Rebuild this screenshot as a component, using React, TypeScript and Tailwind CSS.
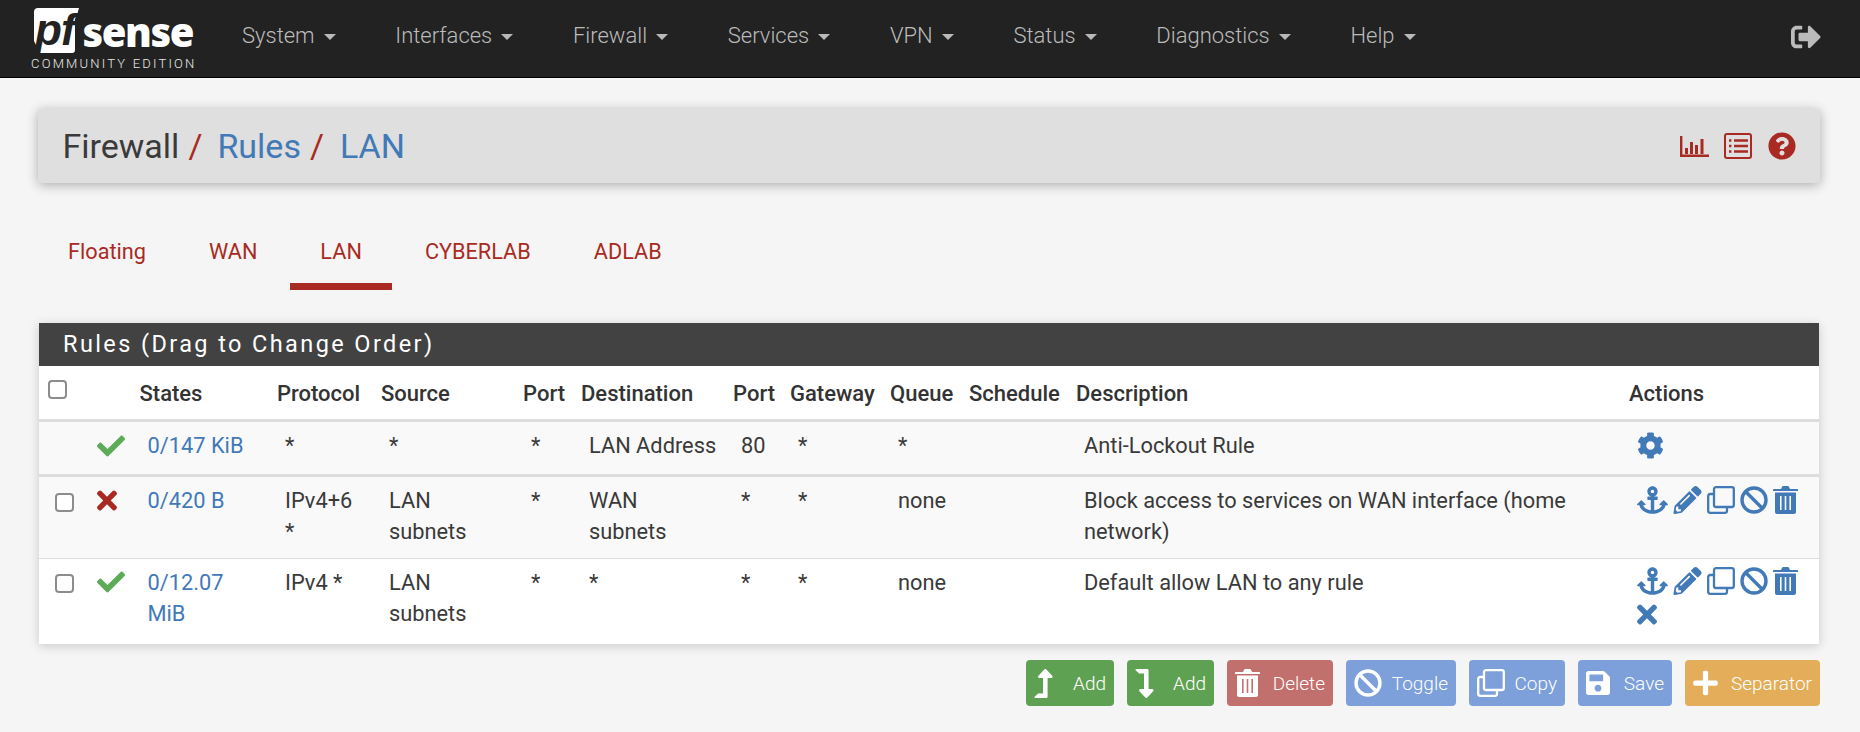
import React from "react";
import {
  FaAnchor, FaPencilAlt, FaCheck, FaTimes, FaCog, FaSignOutAlt, FaQuestionCircle,
  FaLevelUpAlt, FaLevelDownAlt, FaSave, FaPlus,
} from "react-icons/fa";

const Caret = () => (
  <span className="ml-[9px] mt-[2px] inline-block h-0 w-0 border-x-[6px] border-t-[6px] border-x-transparent border-t-[#b9b9b9]" />
);

const Trash = ({ className }: { className: string }) => (
  <svg viewBox="0 0 25 28" className={className} fill="currentColor">
    <path d="M8 3 9.2.6C9.400.2 9.700 0 10.100 0h4.800c.4 0 .7.2.9.6L17 3h7c.6 0 1 .4 1 1v1H0V4c0-.6.4-1 1-1z" />
    <path fillRule="evenodd" d="M2 6.500h21V26c0 1.100-.9 2-2 2H4c-1.100 0-2-.9-2-2zM7 10v14h1.600V10zm4.700 0v14h1.600V10zm4.700 0v14H18V10z" />
  </svg>
);

const Clone = ({ className }: { className: string }) => (
  <svg viewBox="0 0 28 28" className={className} fill="none" stroke="currentColor" strokeWidth="2.300">
    <path d="M7 8H3.200C2 8 1.200 8.800 1.200 10v14.800c0 1.200.8 2 2 2H18c1.200 0 2-.8 2-2V21" />
    <rect x="7" y="1.200" width="19.800" height="19.800" rx="2" />
  </svg>
);

const Ban = ({ className }: { className: string }) => (
  <svg viewBox="0 0 28 28" className={className} fill="none" stroke="currentColor" strokeWidth="3.400">
    <circle cx="14" cy="14" r="12" />
    <path d="M5.500 5.500 22.500 22.500" />
  </svg>
);

const Logo = () => (
  <svg viewBox="0 0 200 77" className="h-[77px] w-[200px] shrink-0">
    <path d="M38 8h41q-1 5-3 8-2 4-1 8v26q0 3-3 3H39q-2-3-3-8l-2-4V12q0-4 4-4z" fill="#fff" />
    <text x="35" y="45" fontFamily="'Liberation Sans', sans-serif" fontWeight="700" fontStyle="italic" fontSize="44" fill="#222" letterSpacing="-1">pf</text>
    <text x="82.500" y="47" fontFamily="'Open Sans', sans-serif" fontWeight="800" fontSize="40" fill="#fff" letterSpacing="-1.400">sense</text>
    <text x="31" y="68" fontFamily="Roboto, sans-serif" fontSize="13" fill="#e8e8e8" letterSpacing="2.200">COMMUNITY EDITION</text>
  </svg>
);

const navItems = ["System", "Interfaces", "Firewall", "Services", "VPN", "Status", "Diagnostics", "Help"];

const Check = () => <FaCheck className="block h-[28px] w-[28px] text-[#5cab56]" />;

const ActionIcons = () => (
  <>
    <FaAnchor className="h-[28px] w-[31px]" />
    <FaPencilAlt className="h-[28px] w-[29px]" />
    <Clone className="h-[28px] w-[28px]" />
    <Ban className="h-[28px] w-[28px]" />
    <Trash className="h-[28px] w-[25px]" />
  </>
);

const td = "align-top pl-2 pt-[8px]";
const Box = ({ className = "" }: { className?: string }) => (
  <input type="checkbox" className={"block h-[19px] w-[19px] appearance-none rounded-[4px] border-2 border-[#8c8c8c] bg-white " + className} />
);

const headers: [string, string][] = [
  ["States", "w-[137.500px]"], ["Protocol", "w-[104px]"], ["Source", "w-[142px]"], ["Port", "w-[58px]"],
  ["Destination", "w-[152px]"], ["Port", "w-[57px]"], ["Gateway", "w-[100px]"], ["Queue", "w-[79px]"],
  ["Schedule", "w-[107px]"], ["Description", "w-[553px]"], ["Actions", ""],
];

const buttons = [
  { label: "Add", w: "w-[88px]", bg: "bg-[#5fa152]", icon: <FaLevelUpAlt className="h-[29px] w-[19px]" /> },
  { label: "Add", w: "w-[87px]", bg: "bg-[#5fa152]", icon: <FaLevelDownAlt className="h-[29px] w-[19px]" /> },
  { label: "Delete", w: "w-[106px]", bg: "bg-[#c2706d]", icon: <Trash className="h-[28px] w-[25px]" /> },
  { label: "Toggle", w: "w-[110px]", bg: "bg-[#7da0da]", icon: <Ban className="h-[28px] w-[28px]" /> },
  { label: "Copy", w: "w-[96px]", bg: "bg-[#7da0da]", icon: <Clone className="h-[28px] w-[28px]" /> },
  { label: "Save", w: "w-[94px]", bg: "bg-[#7da0da]", icon: <FaSave className="h-[28px] w-[24px]" /> },
  { label: "Separator", w: "w-[135px]", bg: "bg-[#e3ad59]", icon: <FaPlus className="h-[28px] w-[25px]" /> },
];

export default function App() {
  return (
    <div className="min-h-[732px] bg-[#f5f5f5] font-['Roboto',sans-serif] text-[22px] leading-[31px] font-light text-[#333]">
      <nav className="flex h-[78px] items-start border-b border-black bg-[#222]">
        <Logo />
        <ul className="ml-[42px] flex pt-[20px] text-[#bbb]">
          {navItems.map((n) => (
            <li key={n} className="mr-[59.700px] flex items-center">
              {n}
              <Caret />
            </li>
          ))}
        </ul>
        <FaSignOutAlt className="ml-auto mr-[39px] mt-[22px] h-[30px] w-[30px] text-[#bbb]" />
      </nav>

      <main className="pl-[38px] pr-[40px]">
        <div className="mt-[31px] flex h-[74px] items-center rounded-[3px] bg-[#dfdfdf] pl-[24.500px] pr-[24px] text-[34px] font-normal text-[#3a3a3a] shadow-[0_2px_12px_rgba(0,0,0,0.3)]">
          <span>Firewall</span>
          <span className="ml-[9px] text-[#a92a23]">/</span>
          <span className="ml-[15px] text-[#4279b7]">Rules</span>
          <span className="ml-[9px] text-[#a92a23]">/</span>
          <span className="ml-[16px] text-[#4279b7]">LAN</span>
          <div className="ml-auto flex items-center gap-[16px] text-[#a92a23]">
            <svg viewBox="0 0 29 21" className="mr-[-1px] h-[21px] w-[29px]" fill="currentColor">
              <path d="M0 0h2.400v18.600H29V21H0z" />
              <path d="M5 12h3v6H5zM10 6h3v12h-3zM15 9h3v9h-3zM20.500 3h3v15h-3z" />
            </svg>
            <svg viewBox="0 0 28 26" className="h-[26px] w-[28px]" fill="none" stroke="currentColor" strokeWidth="2">
              <rect x="1" y="1" width="26" height="24" rx="2" />
              <path d="M10 7.500h14M10 13h14M10 18.500h14" strokeWidth="2.500" />
              <path d="M5 7.500h2.400M5 13h2.400M5 18.500h2.400" strokeWidth="2.500" />
            </svg>
            <FaQuestionCircle className="h-[28px] w-[28px]" />
          </div>
        </div>

        <ul className="flex pt-[53px] text-[21.700px] font-normal text-[#a92a23]">
          {["Floating", "WAN", "LAN", "CYBERLAB", "ADLAB"].map((t) => (
            <li
              key={t}
              className={"mr-[3px] border-b-[7px] px-[30px] pb-[16px] " + (t === "LAN" ? "border-[#a92a23]" : "border-transparent")}
            >
              {t}
            </li>
          ))}
        </ul>

        <section className="ml-px mr-px mt-[33px] bg-white shadow-[0_2px_10px_rgba(0,0,0,0.18)]">
          <h2 className="flex h-[43px] items-center bg-[#424242] pl-[24px] text-[23.500px] font-normal tracking-[2.400px] text-white">
            Rules (Drag to Change Order)
          </h2>
          <table className="w-full table-fixed border-collapse font-normal">
            <thead>
              <tr className="h-[54px] border-b-[3px] border-[#ddd] text-left">
                <th className="w-[50px] pb-[6px] pl-[9px] align-middle"><Box /></th>
                <th className="w-[50.500px]" />
                {headers.map(([h, w], i) => (
                  <th key={i} className={"pt-[2px] font-medium " + w}>{h}</th>
                ))}
              </tr>
            </thead>
            <tbody className="text-[21.800px] text-[#3a3a3a]">
              <tr className="h-[55px] border-b-[3px] border-[#ddd] bg-[#f9f9f9]">
                <td />
                <td className="align-top pl-2 pt-[10px]"><Check /></td>
                <td className={td + " text-[#4279b7]"}>0/147 KiB</td>
                <td className={td}>*</td>
                <td className={td}>*</td>
                <td className={td}>*</td>
                <td className={td}>LAN Address</td>
                <td className={td}>80</td>
                <td className={td}>*</td>
                <td className={td}>*</td>
                <td className={td} />
                <td className={td}>Anti-Lockout Rule</td>
                <td className="align-top pl-2 pt-[10px] text-[#4279b7]"><FaCog className="h-[27px] w-[27px]" /></td>
              </tr>
              <tr className="h-[83px] border-b border-[#ddd] bg-[#f9f9f9]">
                <td className="align-top pl-[16px] pt-[16px]"><Box /></td>
                <td className="align-top pl-2 pt-[9px]"><FaTimes className="block h-[29px] w-[20px] text-[#a92a23]" /></td>
                <td className={td + " text-[#4279b7]"}>0/420 B</td>
                <td className={td}>IPv4+6<br />*</td>
                <td className={td}>LAN<br />subnets</td>
                <td className={td}>*</td>
                <td className={td}>WAN<br />subnets</td>
                <td className={td}>*</td>
                <td className={td}>*</td>
                <td className={td}>none</td>
                <td className={td} />
                <td className={td}>Block access to services on WAN interface (home<br />network)</td>
                <td className="align-top pl-2 pt-[9px] text-[#4279b7]">
                  <div className="flex flex-wrap gap-x-[5px] gap-y-[4px]"><ActionIcons /></div>
                </td>
              </tr>
              <tr className="h-[86px]">
                <td className="align-top pl-[16px] pt-[15px]"><Box /></td>
                <td className="align-top pl-2 pt-[9px]"><Check /></td>
                <td className={td + " text-[#4279b7]"}>0/12.07<br />MiB</td>
                <td className={td}>IPv4 *</td>
                <td className={td}>LAN<br />subnets</td>
                <td className={td}>*</td>
                <td className={td}>*</td>
                <td className={td}>*</td>
                <td className={td}>*</td>
                <td className={td}>none</td>
                <td className={td} />
                <td className={td}>Default allow LAN to any rule</td>
                <td className="align-top pl-2 pt-[8px] text-[#4279b7]">
                  <div className="flex flex-wrap gap-x-[5px] gap-y-[5px]">
                    <ActionIcons />
                    <FaTimes className="h-[29px] w-[20px]" />
                  </div>
                </td>
              </tr>
            </tbody>
          </table>
        </section>

        <div className="mt-[16px] flex justify-end gap-[13px] text-[19px] text-white">
          {buttons.map((b, i) => (
            <button key={i} className={"flex h-[46px] items-center justify-between rounded-[4px] px-[8px] " + b.w + " " + b.bg}>
              {b.icon}
              <span>{b.label}</span>
            </button>
          ))}
        </div>
      </main>
    </div>
  );
}
